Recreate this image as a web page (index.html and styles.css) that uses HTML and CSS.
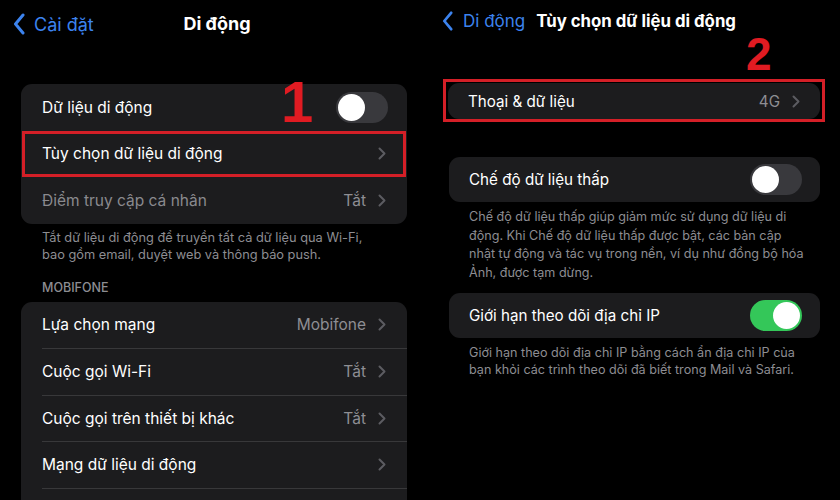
FILE: index.html
```html
<!DOCTYPE html>
<html lang="vi">
<head>
<meta charset="utf-8">
<title>Di động</title>
<link rel="stylesheet" href="styles.css">
</head>
<body>
<div class="screen">
  <section class="panel left">
    <header class="nav">
      <span class="back"><svg class="back-ico" viewBox="0 0 12 22" width="12" height="22"><path d="M10 2 L2.5 11 L10 20" fill="none" stroke="currentColor" stroke-width="3" stroke-linecap="round" stroke-linejoin="round"/></svg><span>Cài đặt</span></span>
      <h1 class="title">Di động</h1>
    </header>

    <div class="group g-top">
      <div class="row"><span class="label">Dữ liệu di động</span><span class="toggle"><span class="knob"></span></span></div>
      <div class="row marked"><span class="label">Tùy chọn dữ liệu di động</span><span class="acc"><svg class="chev" viewBox="0 0 8 13" width="8" height="13"><path d="M1.5 1.5 L6.5 6.5 L1.5 11.5" fill="none" stroke="currentColor" stroke-width="2" stroke-linecap="round" stroke-linejoin="round"/></svg></span></div>
      <div class="row"><span class="label dim">Điểm truy cập cá nhân</span><span class="acc"><span class="val">Tắt</span><svg class="chev" viewBox="0 0 8 13" width="8" height="13"><path d="M1.5 1.5 L6.5 6.5 L1.5 11.5" fill="none" stroke="currentColor" stroke-width="2" stroke-linecap="round" stroke-linejoin="round"/></svg></span></div>
    </div>
    <p class="foot">Tắt dữ liệu di động để truyền tất cả dữ liệu qua Wi-Fi,<br>bao gồm email, duyệt web và thông báo push.</p>
    <h2 class="sect">MOBIFONE</h2>
    <div class="group sep">
      <div class="row"><span class="label">Lựa chọn mạng</span><span class="acc"><span class="val">Mobifone</span><svg class="chev" viewBox="0 0 8 13" width="8" height="13"><path d="M1.5 1.5 L6.5 6.5 L1.5 11.5" fill="none" stroke="currentColor" stroke-width="2" stroke-linecap="round" stroke-linejoin="round"/></svg></span></div>
      <div class="row"><span class="label">Cuộc gọi Wi-Fi</span><span class="acc"><span class="val">Tắt</span><svg class="chev" viewBox="0 0 8 13" width="8" height="13"><path d="M1.5 1.5 L6.5 6.5 L1.5 11.5" fill="none" stroke="currentColor" stroke-width="2" stroke-linecap="round" stroke-linejoin="round"/></svg></span></div>
      <div class="row"><span class="label">Cuộc gọi trên thiết bị khác</span><span class="acc"><span class="val">Tắt</span><svg class="chev" viewBox="0 0 8 13" width="8" height="13"><path d="M1.5 1.5 L6.5 6.5 L1.5 11.5" fill="none" stroke="currentColor" stroke-width="2" stroke-linecap="round" stroke-linejoin="round"/></svg></span></div>
      <div class="row"><span class="label">Mạng dữ liệu di động</span><span class="acc"><svg class="chev" viewBox="0 0 8 13" width="8" height="13"><path d="M1.5 1.5 L6.5 6.5 L1.5 11.5" fill="none" stroke="currentColor" stroke-width="2" stroke-linecap="round" stroke-linejoin="round"/></svg></span></div>
      <div class="row"><span class="label"></span></div>
    </div>
    <span class="num n1">1</span>
  </section>

  <section class="panel right">
    <header class="nav nav-r">
      <span class="back"><svg class="back-ico" viewBox="0 0 12 22" width="11" height="20"><path d="M10 2 L2.5 11 L10 20" fill="none" stroke="currentColor" stroke-width="3" stroke-linecap="round" stroke-linejoin="round"/></svg><span>Di động</span></span>
      <h1 class="title-r">Tùy chọn dữ liệu di động</h1>
    </header>

    <div class="mark-box">
      <div class="group">
        <div class="row short"><span class="label">Thoại &amp; dữ liệu</span><span class="acc"><span class="val">4G</span><svg class="chev" viewBox="0 0 8 13" width="8" height="13"><path d="M1.5 1.5 L6.5 6.5 L1.5 11.5" fill="none" stroke="currentColor" stroke-width="2" stroke-linecap="round" stroke-linejoin="round"/></svg></span></div>
      </div>
    </div>

    <div class="group r-mid">
      <div class="row"><span class="label">Chế độ dữ liệu thấp</span><span class="toggle"><span class="knob"></span></span></div>
    </div>
    <p class="foot foot-r">Chế độ dữ liệu thấp giúp giảm mức sử dụng dữ liệu di<br>động. Khi Chế độ dữ liệu thấp được bật, các bản cập<br>nhật tự động và tác vụ trong nền, ví dụ như đồng bộ hóa<br>Ảnh, được tạm dừng.</p>

    <div class="group r-last">
      <div class="row"><span class="label">Giới hạn theo dõi địa chỉ IP</span><span class="toggle on"><span class="knob"></span></span></div>
    </div>
    <p class="foot foot-r2">Giới hạn theo dõi địa chỉ IP bằng cách ẩn địa chỉ IP của<br>bạn khỏi các trình theo dõi đã biết trong Mail và Safari.</p>
    <span class="num n2">2</span>
  </section>
</div>
</body>
</html>
```

FILE: styles.css
```css
* { box-sizing: border-box; }
html, body { margin: 0; padding: 0; background: #000; }
body {
  width: 840px;
  height: 500px;
  overflow: hidden;
  font-family: Inter, "Noto Sans", "DejaVu Sans", sans-serif;
  color: #fff;
  -webkit-font-smoothing: antialiased;
}
.screen { display: flex; width: 840px; height: 500px; }
.panel { position: relative; width: 420px; height: 500px; overflow: hidden; }
.left { padding: 0 13px 0 21px; }
.right { padding: 0 20px 0 29px; }

/* nav */
.nav { display: flex; align-items: center; height: 48px; position: relative; }
.back { display: flex; align-items: center; gap: 9px; color: #3c83ee; font-size: 18px; margin-left: -8px; }
.back-ico { display: block; }
.title {
  position: absolute; left: 0; right: 0; top: 0; margin: 0;
  text-align: center; line-height: 48px; font-size: 18px; font-weight: 700;
  pointer-events: none;
  padding-left: 6px;
}
.nav-r { height: 42px; }
.nav-r .back { margin-left: -7px; font-size: 17px; gap: 10px; }
.title-r { margin: 0 0 0 11px; font-size: 16.8px; font-weight: 700; white-space: nowrap; }

/* groups */
.group { background: #1c1c1e; border-radius: 11px; }
.g-top { margin-top: 36px; }
.row {
  height: 46.5px;
  display: flex; align-items: center; justify-content: space-between;
  padding: 0 21px;
  font-size: 15.5px;
}
.label { white-space: nowrap; }
.label.dim { color: #8a8a8e; }
.acc { display: flex; align-items: center; gap: 12px; color: #8e8e93; }
.val { color: #8e8e93; }
.chev { display: block; color: #5c5c61; }

.marked { outline: 3px solid #d41f27; outline-offset: -3px; margin: 0 1px; padding: 0 20px; }

.sep .row { margin-left: 21px; padding-left: 0; }
.sep .row + .row { border-top: 1px solid #38383a; }

/* toggle */
.toggle {
  width: 52px; height: 31px; border-radius: 16px;
  background: #39393d; padding: 2px; display: flex;
  margin-right: -2px;
}
.knob { width: 27px; height: 27px; border-radius: 50%; background: #fff; }
.toggle.on { background: #34c759; justify-content: flex-end; }

/* footers */
.foot {
  margin: 0; padding: 5px 21px 0;
  font-size: 12.8px; line-height: 17px; color: #8d8d92;
  white-space: nowrap;
}
.sect {
  margin: 16px 0 0; padding: 0 21px 5px;
  font-size: 12.5px; font-weight: 500; line-height: 18px; color: #8d8d92;
}

/* right panel */
.right .row { padding: 0 20px; font-size: 15.2px; height: 45px; }
.right .row.short { height: 36px; }
.mark-box {
  margin: 37px -5px 0 -6px;
  border: 3px solid #d41f27;
  padding: 1px 2px 0 2px;
}
.r-mid { margin-top: 35px; }
.foot-r { padding: 6px 20px 0; font-size: 12.6px; line-height: 18.5px; }
.r-last { margin-top: 11px; }
.foot-r2 { padding: 6px 20px 0; font-size: 12.6px; line-height: 17px; }

/* annotations */
.num {
  position: absolute;
  font-family: "Liberation Sans", Arial, sans-serif;
  font-weight: 700;
  color: #e01b22;
  line-height: 1;
}
.n1 { left: 281px; top: 73px; font-size: 58px; }
.n2 { left: 326px; top: 31px; font-size: 46px; }
```
